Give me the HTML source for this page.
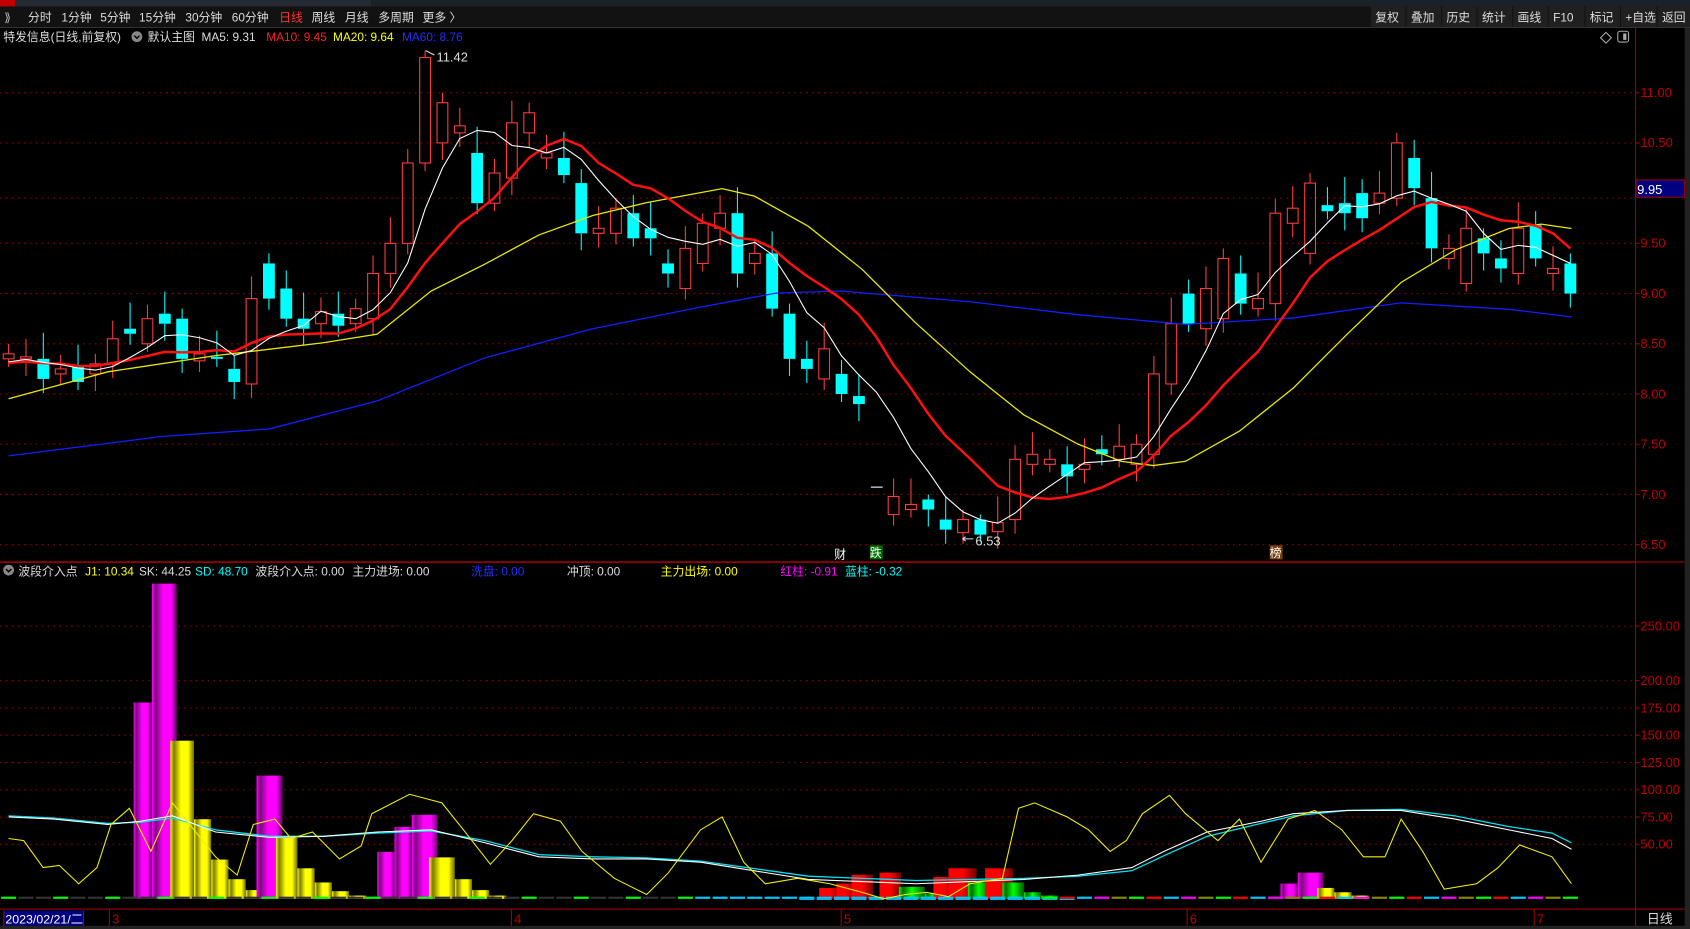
<!DOCTYPE html>
<html><head><meta charset="utf-8">
<style>
html,body{margin:0;padding:0;background:#000;width:1690px;height:929px;overflow:hidden}
svg{display:block}
text{font-family:"Liberation Sans","Noto Sans CJK SC",sans-serif}
</style></head>
<body>
<svg id="s" width="1690" height="929" viewBox="0 0 1568 862" preserveAspectRatio="none" xmlns="http://www.w3.org/2000/svg">
<defs>
<linearGradient id="gm" x1="0" x2="1"><stop offset="0" stop-color="#ff00ff"/><stop offset=".15" stop-color="#7a0a7a"/><stop offset=".45" stop-color="#ff00ff"/><stop offset=".75" stop-color="#ff00ff"/><stop offset="1" stop-color="#6a006a"/></linearGradient>
<linearGradient id="gy" x1="0" x2="1"><stop offset="0" stop-color="#ffff00"/><stop offset=".15" stop-color="#7a7a00"/><stop offset=".45" stop-color="#ffff00"/><stop offset=".75" stop-color="#ffff00"/><stop offset="1" stop-color="#6a6a00"/></linearGradient>
<linearGradient id="gr" x1="0" x2="1"><stop offset="0" stop-color="#ff0000"/><stop offset=".5" stop-color="#ff0000"/><stop offset="1" stop-color="#700000"/></linearGradient>
<linearGradient id="gg" x1="0" x2="1"><stop offset="0" stop-color="#00ff00"/><stop offset=".15" stop-color="#006600"/><stop offset=".5" stop-color="#00ff00"/><stop offset="1" stop-color="#006000"/></linearGradient>
</defs>
<rect width="1568" height="862" fill="#000"/>
<rect x="0" y="0" width="1568" height="6" fill="#1c2028"/>
<rect x="0" y="0" width="14" height="6" fill="#c00000"/>
<rect x="14" y="0" width="330" height="6" fill="#262a33"/>
<rect x="0" y="6" width="1568" height="20" fill="#121212"/>
<line x1="0" y1="25.5" x2="1568" y2="25.5" stroke="#333"/>
<text x="4" y="20" font-size="11" fill="#bbb">⟫</text>
<g font-size="11" fill="#ddd">
<text x="26" y="20">分时</text><text x="57" y="20">1分钟</text><text x="93" y="20">5分钟</text><text x="129" y="20">15分钟</text><text x="172" y="20">30分钟</text><text x="215" y="20">60分钟</text>
<text x="259" y="20" fill="#ff3030">日线</text><text x="289" y="20">周线</text><text x="320" y="20">月线</text><text x="351" y="20">多周期</text><text x="392" y="20">更多 〉</text>
</g>
<g id="btns" font-size="11" fill="#ddd"></g>
<g font-size="11">
<text x="3" y="38" fill="#ddd">特发信息(日线,前复权)</text>
<circle cx="127" cy="34" r="5" fill="#888"/><path d="M124.5 33l2.5 2.5 2.5-2.5" stroke="#000" stroke-width="1.3" fill="none"/>
<text x="137" y="38" fill="#ddd">默认主图</text>
<text x="187" y="38" fill="#ddd">MA5: 9.31</text>
<text x="247" y="38" fill="#ff2020">MA10: 9.45</text>
<text x="309" y="38" fill="#ffff00">MA20: 9.64</text>
<text x="373" y="38" fill="#2030ff">MA60: 8.76</text>
</g>
<path d="M1485 35l5-5 5 5-5 5z" fill="none" stroke="#aaa"/>
<rect x="1501" y="29" width="10" height="10" rx="2" fill="none" stroke="#aaa"/><rect x="1506" y="31" width="3" height="6" fill="#aaa"/>
<g id="grid"></g>
<g id="main"></g>
<g id="ind"></g>
<line x1="1517.5" y1="26" x2="1517.5" y2="862" stroke="#a00000"/>
<rect x="1563" y="26" width="5" height="836" fill="#222"/>
<g id="axis" font-size="12" fill="#c00000"></g>
<rect x="1518" y="167" width="45" height="16" fill="#000080" stroke="#a00000"/>
<text x="1519" y="180" font-size="12" fill="#fff">9.95</text>
<line x1="0" y1="521.5" x2="1517" y2="521.5" stroke="#a00000" stroke-width="1.5"/>
<line x1="1517" y1="521.5" x2="1563" y2="521.5" stroke="#a00000"/>
<text x="774" y="518" font-size="11" fill="#fff">财</text>
<rect x="807" y="506" width="12" height="13" fill="#007000"/><text x="807" y="517" font-size="11" fill="#fff">跌</text>
<rect x="1178" y="506" width="12" height="13" fill="#7a4010"/><text x="1178" y="517" font-size="11" fill="#fff">榜</text>
<g font-size="11">
<circle cx="8" cy="529" r="5" fill="#888"/><path d="M5.5 528l2.5 2.5 2.5-2.5" stroke="#000" stroke-width="1.3" fill="none"/>
<text x="17" y="534" fill="#ddd">波段介入点</text>
<text x="79" y="534" fill="#ffff00">J1: 10.34</text>
<text x="129" y="534" fill="#ddd">SK: 44.25</text>
<text x="181" y="534" fill="#00ffff">SD: 48.70</text>
<text x="237" y="534" fill="#ddd">波段介入点: 0.00</text>
<text x="327" y="534" fill="#ddd">主力进场: 0.00</text>
<text x="437" y="534" fill="#2030ff">洗盘: 0.00</text>
<text x="526" y="534" fill="#ddd">冲顶: 0.00</text>
<text x="613" y="534" fill="#ffff00">主力出场: 0.00</text>
<text x="724" y="534" fill="#ff00ff">红柱: -0.91</text>
<text x="784" y="534" fill="#00ffff">蓝柱: -0.32</text>
</g>
<rect x="0" y="835" width="1517" height="8" fill="#000"/>
<line x1="0" y1="843.5" x2="1563" y2="843.5" stroke="#a00000"/>
<rect x="3" y="845" width="74" height="14" fill="#000080"/>
<line x1="3.5" y1="845" x2="3.5" y2="859" stroke="#a00000"/><line x1="77.5" y1="845" x2="77.5" y2="859" stroke="#a00000"/>
<text x="5" y="857" font-size="11.5" fill="#fff">2023/02/21/二</text>
<g font-size="12" fill="#c00000">
<line x1="101.5" y1="844" x2="101.5" y2="859" stroke="#a00000"/><text x="104" y="857">3</text>
<line x1="474.5" y1="844" x2="474.5" y2="859" stroke="#a00000"/><text x="477" y="857">4</text>
<line x1="780.5" y1="844" x2="780.5" y2="859" stroke="#a00000"/><text x="783" y="857">5</text>
<line x1="1101.5" y1="844" x2="1101.5" y2="859" stroke="#a00000"/><text x="1104" y="857">6</text>
<line x1="1423.5" y1="844" x2="1423.5" y2="859" stroke="#a00000"/><text x="1426" y="857">7</text>
</g>
<text x="1528" y="857" font-size="12" fill="#ddd">日线</text>
<rect x="0" y="859" width="1568" height="3" fill="#222"/>
</svg>
<script>
const NS="http://www.w3.org/2000/svg";
function el(p,t,a,txt){const e=document.createElementNS(NS,t);for(const k in a)e.setAttribute(k,a[k]);if(txt!=null)e.textContent=txt;document.getElementById(p).appendChild(e);return e;}
const bt=["复权","叠加","历史","统计","画线","F10","标记","+自选","返回"];
let bx=1272;bt.forEach(b=>{const w=b.length>2?34:33;el("btns","rect",{x:bx,y:6,width:w-1,height:19,fill:"#202020"});el("btns","text",{x:bx+4,y:20},b);bx+=w;});
const Y=p=>86+(11-p)*93.2;
[11,10.5,9.5,9,8.5,8,7.5,7,6.5].forEach(p=>{const y=Y(p);el("grid","line",{x1:0,y1:y,x2:1517,y2:y,stroke:"#900000","stroke-dasharray":"1.5 4"});el("axis","text",{x:1522,y:y+4},p.toFixed(2));el("axis","line",{x1:1517,y1:y,x2:1521,y2:y,stroke:"#a00000"});});
el("grid","line",{x1:0,y1:Y(9.95),x2:1517,y2:Y(9.95),stroke:"#900000","stroke-dasharray":"1.5 4"});
const IY=v=>834-v*1.012;
[250,200,175,150,125,100,75,50].forEach(v=>{const y=IY(v);el("grid","line",{x1:0,y1:y,x2:1517,y2:y,stroke:"#900000","stroke-dasharray":"1.5 4"});el("axis","text",{x:1522,y:y+4},v.toFixed(2));el("axis","line",{x1:1517,y1:y,x2:1521,y2:y,stroke:"#a00000"});});
const C=[[8.35,8.4],[8.35,8.37],[8.35,8.15],[8.2,8.25],[8.27,8.12],[8.2,8.3],[8.3,8.55],[8.65,8.6],[8.5,8.75],[8.8,8.7],[8.75,8.35],[8.33,8.4],[8.37,8.35],[8.25,8.12],[8.1,8.95],[9.3,8.95],[9.05,8.75],[8.75,8.65],[8.7,8.82],[8.8,8.68],[8.7,8.85],[8.75,9.2],[9.2,9.5],[9.5,10.3],[10.3,11.35],[10.5,10.9],[10.6,10.67],[10.4,9.9],[9.9,10.2],[10.15,10.7],[10.6,10.8],[10.35,10.4],[10.35,10.18],[10.1,9.6],[9.6,9.65],[9.6,9.85],[9.8,9.55],[9.65,9.55],[9.3,9.2],[9.05,9.45],[9.3,9.7],[9.65,9.8],[9.8,9.2],[9.3,9.4],[9.4,8.85],[8.8,8.35],[8.35,8.25],[8.15,8.45],[8.2,8.0],[7.98,7.9],[null,7.5],[6.8,6.98],[6.85,6.9],[6.95,6.85],[6.75,6.65],[6.62,6.75],[6.75,6.6],[6.63,6.72],[6.75,7.35],[7.3,7.4],[7.3,7.35],[7.3,7.18],[7.25,7.3],[7.45,7.4],[7.35,7.48],[7.3,7.5],[7.4,8.2],[8.1,8.7],[9.0,8.7],[8.65,9.05],[8.75,9.35],[9.2,8.9],[8.85,8.95],[8.9,9.8],[9.7,9.85],[9.4,10.1],[9.88,9.82],[9.9,9.8],[10.0,9.75],[9.9,10.0],[9.95,10.5],[10.35,10.05],[9.95,9.45],[9.35,9.45],[9.1,9.65],[9.55,9.4],[9.35,9.25],[9.2,9.65],[9.68,9.35],[9.2,9.25],[9.3,9.0]];
const X=i=>8+i*16.1;
const bw=11;
C.forEach((c,i)=>{const [o,cl]=c;if(o===null)return;const up=cl>=o;const x=X(i);const hi=Math.max(o,cl)+0.1+((i*7)%5)*0.04,lo=Math.min(o,cl)-0.08-((i*3)%4)*0.03;
 const col=up?"#ff3b3b":"#00ffff";
 const hh=i==24?11.42:(i==53||i==56?Math.max(o,cl)+0.05:hi);const ll=i==56?6.53:lo;
 el("main","line",{x1:x,y1:Y(hh),x2:x,y2:Y(Math.max(o,cl)),stroke:col});
 el("main","line",{x1:x,y1:Y(Math.min(o,cl)),x2:x,y2:Y(ll),stroke:col});
 let t=Y(Math.max(o,cl)),h=Math.max(1,Math.abs(Y(o)-Y(cl)));
 if(up)el("main","rect",{x:x-bw/2+0.5,y:t,width:bw-1,height:h,fill:"none",stroke:col});
 else el("main","rect",{x:x-bw/2,y:t,width:bw,height:h,fill:col});
});
const closes=C.map(c=>c[1]);const pre=[8.2,8.25,8.3,8.3,8.35,8.3,8.25,8.3,8.35,8.3];
const all=pre.concat(closes);
function ma(n){const pts=[];for(let i=0;i<closes.length;i++){let s=0;for(let k=0;k<n;k++)s+=all[i+10-k];pts.push(X(i).toFixed(1)+","+Y(s/n).toFixed(1));}return pts.join(" ");}
const yel="8,370 100,345 200,330 300,318 350,310 400,270 450,245 500,218 550,200 600,188 670,175 700,182 750,210 800,250 850,300 900,345 950,385 1000,412 1040,428 1070,432 1100,428 1150,400 1200,360 1250,310 1300,262 1350,232 1400,212 1430,208 1458,212";
const blu="8,423 150,405 250,398 350,372 450,332 550,305 650,285 720,272 780,270 900,280 1000,292 1100,301 1200,295 1300,281 1400,287 1458,294";
el("main","polyline",{points:blu,fill:"none",stroke:"#1020ff","stroke-width":1.2});
el("main","polyline",{points:yel,fill:"none",stroke:"#e8e800","stroke-width":1.2});
el("main","polyline",{points:ma(10),fill:"none",stroke:"#ff1010","stroke-width":2.3});
el("main","polyline",{points:ma(5),fill:"none",stroke:"#fff","stroke-width":1});
el("main","text",{x:405,y:57,"font-size":12,fill:"#ddd"},"11.42");
el("main","path",{d:"M395 47l8 4",stroke:"#ddd",fill:"none"});
el("main","text",{x:905,y:506,"font-size":12,fill:"#ddd"},"6.53");
el("main","path",{d:"M893 500h10 M893 500l3-2 M893 500l3 2",stroke:"#ddd",fill:"none"});
el("main","line",{x1:808,y1:452,x2:819,y2:452,stroke:"#fff"});
const B=[[124,17,180,"gm"],[141,23,290,"gm"],[158,22,145,"gy"],[180,16,73,"gy"],[196,16,36,"gy"],[212,16,18,"gy"],[228,16,8,"gy"],[238,24,113,"gm"],[256,20,56,"gy"],[276,16,28,"gy"],[292,16,15,"gy"],[308,16,7,"gy"],[324,16,3,"gy"],[350,16,43,"gm"],[366,16,66,"gm"],[382,24,77,"gm"],[398,24,38,"gy"],[422,16,18,"gy"],[438,16,8,"gy"],[454,16,3,"gy"],
[760,20,10,"gr"],[776,18,14,"gr"],[790,20,22,"gr"],[816,20,24,"gr"],[834,24,11,"gg"],[858,16,5,"gg"],[866,20,20,"gr"],[880,26,28,"gr"],[898,20,15,"gg"],[914,26,28,"gr"],[930,20,15,"gg"],[950,16,6,"gg"],[966,16,3,"gg"],
[1188,16,14,"gm"],[1204,24,24,"gm"],[1222,16,10,"gy"],[1238,16,6,"gy"],[1254,16,3,"gy"]];
B.forEach(b=>{const v=Math.min(b[2],289);el("ind","rect",{x:b[0],y:IY(v),width:b[1],height:834-IY(v),fill:"url(#"+b[3]+")"});});
for(let i=0;i<91;i++){const x=X(i)-7;const cols=["#00ff00","#ff0000","#00c8ff","#ff00ff","#888800"];const c=i<40?(i%3==0?"#00ff00":"#333"):(i<60?"#00c8ff":cols[i%5]);el("ind","rect",{x:x,y:832,width:14,height:2,fill:c});}
for(let i=46;i<62;i++){el("ind","rect",{x:X(i)-7,y:834,width:14,height:3,fill:"#00c8ff"});}
const sk="8,758 50,760 100,765 130,762 160,757 200,772 250,777 300,776 350,772 400,770 450,782 500,795 550,797 600,797 650,800 700,808 750,816 800,818 850,820 900,818 950,816 1000,812 1050,805 1080,790 1120,772 1170,762 1200,755 1250,752 1300,752 1350,760 1400,770 1440,778 1458,788";
const sd="8,757 50,759 100,764 130,763 160,759 200,770 250,776 300,776 350,773 400,771 450,780 500,793 550,795 600,796 650,799 700,806 750,813 800,815 850,817 900,816 950,815 1000,813 1050,808 1080,794 1120,776 1170,764 1200,757 1250,752 1300,751 1350,757 1400,767 1440,773 1458,782";
el("ind","polyline",{points:sd,fill:"none",stroke:"#00e0f0","stroke-width":1.2});
el("ind","polyline",{points:sk,fill:"none",stroke:"#fff","stroke-width":1});
const j="8,778 22,780 40,805 55,803 73,820 90,805 103,765 120,750 140,790 160,745 180,770 200,795 220,812 235,765 255,760 270,778 290,772 315,797 335,785 345,755 380,737 410,745 430,770 455,802 475,780 495,755 520,762 540,790 570,815 600,830 620,810 650,770 670,758 690,800 710,820 740,815 770,820 800,828 820,834 840,830 860,828 880,832 900,820 930,815 945,750 960,745 990,758 1010,770 1030,790 1045,780 1060,755 1085,738 1100,755 1130,780 1150,760 1170,800 1195,760 1220,752 1245,770 1265,795 1285,795 1300,760 1320,790 1340,825 1370,820 1390,805 1410,784 1440,795 1458,820";
el("ind","polyline",{points:j,fill:"none",stroke:"#f0f000","stroke-width":1});
</script>
</body></html>
